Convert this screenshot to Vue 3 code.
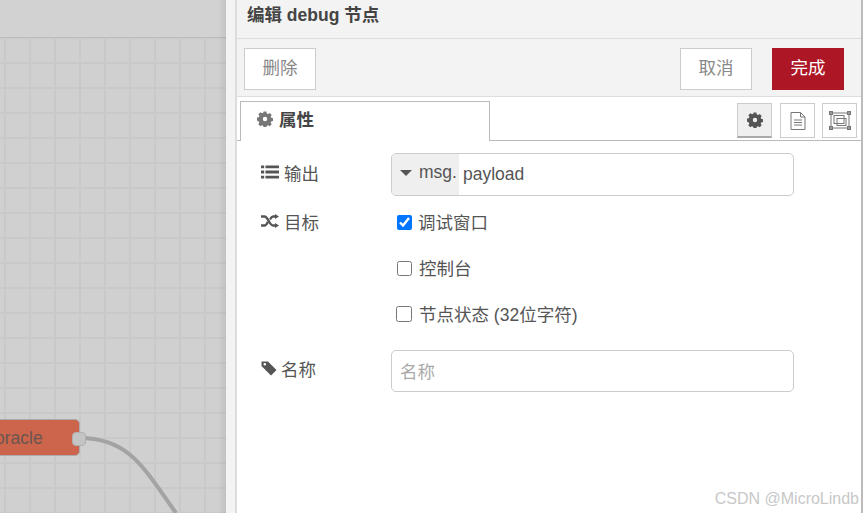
<script setup>
const targets = [
  { label: '调试窗口', checked: true },
  { label: '控制台', checked: false },
  { label: '节点状态 (32位字符)', checked: false }
]
</script>

<template>
  <div class="page">
    <div class="canvas">
      <div class="canvas-head"></div>
      <div class="grid"></div>
      <svg class="wire" width="226" height="513">
        <path d="M80 438 C130 438 145 470 176 513" />
      </svg>
      <div class="node">
        <span class="node-label">oracle</span>
        <span class="port"></span>
      </div>
    </div>

    <div class="tray">
      <div class="tray-inner">
        <div class="title">编辑 debug 节点</div>
        <div class="toolbar">
          <button class="btn">删除</button>
          <div class="spacer"></div>
          <button class="btn">取消</button>
          <button class="btn primary">完成</button>
        </div>
        <div class="tabs">
          <div class="tab">
            <svg class="icon gear" viewBox="0 0 16 16"><path d="M6.600 .5h2.800l.4 1.900 1.300.5 1.600-1 2 2-1 1.600.5 1.300 1.900.4v2.800l-1.900.4-.5 1.300 1 1.600-2 2-1.600-1-1.300.5-.4 1.900H6.600l-.4-1.900-1.300-.5-1.600 1-2-2 1-1.600-.5-1.300L0 9.400V6.600l1.900-.4.5-1.300-1-1.600 2-2 1.600 1 1.300-.5zM8 5.800a2.200 2.200 0 1 0 0 4.400 2.200 2.200 0 0 0 0-4.400z" fill-rule="evenodd" /></svg>
            <span>属性</span>
          </div>
          <div class="spacer"></div>
          <div class="tab-btn active">
            <svg class="icon gear-dark" viewBox="0 0 16 16"><path d="M6.600 .5h2.800l.4 1.900 1.300.5 1.600-1 2 2-1 1.600.5 1.300 1.900.4v2.800l-1.900.4-.5 1.300 1 1.600-2 2-1.600-1-1.300.5-.4 1.900H6.600l-.4-1.900-1.300-.5-1.600 1-2-2 1-1.600-.5-1.300L0 9.400V6.600l1.900-.4.5-1.300-1-1.600 2-2 1.600 1 1.300-.5zM8 5.800a2.200 2.200 0 1 0 0 4.400 2.200 2.200 0 0 0 0-4.400z" fill-rule="evenodd" /></svg>
          </div>
          <div class="tab-btn">
            <svg class="doc" width="16" height="18" viewBox="0 0 16 18">
              <path d="M1 .5H10.500L15 5V17.500H1Z" />
              <path d="M10.500 .5V5H15M4 8H12M4 10.500H12M4 13H12" />
            </svg>
          </div>
          <div class="tab-btn">
            <svg class="frame" width="22" height="20" viewBox="0 0 22 20">
              <rect x="2" y="2" width="18" height="15" />
              <rect x="5" y="4.500" width="10" height="8" />
              <rect x="8" y="7.500" width="9" height="7" />
              <rect class="dot" x="0.500" y="0.500" width="3" height="3" />
              <rect class="dot" x="18.500" y="0.500" width="3" height="3" />
              <rect class="dot" x="0.500" y="15.500" width="3" height="3" />
              <rect class="dot" x="18.500" y="15.500" width="3" height="3" />
            </svg>
          </div>
        </div>

        <div class="form">
          <div class="row output">
            <label class="lbl">
              <svg class="icon list" viewBox="0 0 18 14"><path d="M0 .5h3.200v2.800H0zM4.500 .5H18v2.800H4.500zM0 5.600h3.200v2.800H0zM4.500 5.600H18v2.800H4.500zM0 10.700h3.200v2.800H0zM4.500 10.700H18v2.800H4.500z" /></svg>
              <span>输出</span>
            </label>
            <div class="typed">
              <div class="typed-type"><i class="caret"></i><span>msg.</span></div>
              <span class="typed-value">payload</span>
            </div>
          </div>

          <div class="row target">
            <label class="lbl">
              <svg class="icon shuffle" viewBox="0 0 18 14"><path d="M0 2.500h3.500c3.500 0 5 9 8.500 9h2.500" /><path d="M0 11.500h3.500c1.500 0 2.500-1.800 3.500-3.800M9 5.500c.9-1.600 1.800-3 3-3h2.500" /><path class="head" d="M14 0l4 2.500-4 2.500zM14 9l4 2.500-4 2.500z" /></svg>
              <span>目标</span>
            </label>
            <div class="checks">
              <label v-for="t in targets" :key="t.label" class="check">
                <input type="checkbox" :checked="t.checked" />
                <span>{{ t.label }}</span>
              </label>
            </div>
          </div>

          <div class="row name">
            <label class="lbl">
              <svg class="icon tag" viewBox="0 0 16 16"><path d="M.5 1.500h6.500l8.500 8.500-5.500 5.500-9.500-9.500zM3.800 3a1.300 1.300 0 1 0 0 2.600 1.300 1.300 0 0 0 0-2.600z" fill-rule="evenodd" /></svg>
              <span class="name-text">名称</span>
            </label>
            <div class="text-input">名称</div>
          </div>
        </div>
      </div>
      <div class="watermark">CSDN @MicroLindb</div>
    </div>
  </div>
</template>

<style>
html, body {
  margin: 0;
  overflow: hidden;
}
</style>

<style scoped>
.page {
  display: flex;
  width: 863px;
  height: 513px;
  overflow: hidden;
  font-family: "Liberation Sans", "Noto Sans CJK SC", sans-serif;
  font-size: 17.5px;
  color: #555;
}

.canvas {
  position: relative;
  width: 226px;
  flex: none;
  background: #d0d0d0;
}

.canvas-head {
  height: 37px;
  background: #d2d2d2;
  border-bottom: 1px solid #bdbdbd;
}

.grid {
  position: absolute;
  top: 38px;
  left: 0;
  right: 0;
  bottom: 0;
  background-image:
    linear-gradient(to right, #c9c9c9 2px, transparent 2px),
    linear-gradient(to bottom, #c9c9c9 2px, transparent 2px);
  background-size: 25px 25px;
  background-position: 4px 24px;
}

.canvas::after {
  content: "";
  position: absolute;
  top: 0;
  right: 0;
  bottom: 0;
  width: 8px;
  background: linear-gradient(to right, rgba(0, 0, 0, 0), rgba(0, 0, 0, 0.07));
}

.wire {
  position: absolute;
  top: 0;
  left: 0;
}

.wire path {
  fill: none;
  stroke: #a3a3a3;
  stroke-width: 4;
}

.node {
  position: absolute;
  left: -19px;
  top: 419px;
  width: 99px;
  height: 37px;
  box-sizing: border-box;
  background: #cd654c;
  border: 1px solid #ababab;
  border-radius: 5px;
  display: flex;
  align-items: center;
  padding: 1px 0 0 13px;
  color: #6a5550;
}

.port {
  position: absolute;
  right: -7px;
  top: 12px;
  width: 12px;
  height: 12px;
  background: #c4c4c4;
  border: 1px solid #b0b0b0;
  border-radius: 4px;
}

.tray {
  position: relative;
  flex: 1;
  background: #f3f3f3;
  padding-left: 9px;
}

.tray-inner {
  height: 100%;
  background: #fff;
  border-left: 2px solid #dcdcdc;
  border-right: 2px solid #bbb;
}

.title {
  height: 39px;
  box-sizing: border-box;
  background: #f3f3f3;
  border-bottom: 1px solid #ddd;
  padding: 1px 0 0 10px;
  font-weight: bold;
  color: #444;
}

.toolbar {
  height: 58px;
  box-sizing: border-box;
  background: #f3f3f3;
  border-bottom: 1px solid #ddd;
  display: flex;
  align-items: flex-start;
  gap: 20px;
  padding: 9px 17px 0 7px;
}

.spacer {
  flex: 1;
}

.btn {
  width: 72px;
  height: 42px;
  background: #fff;
  border: 1px solid #ccc;
  font: inherit;
  color: #888;
  padding: 0 0 5px;
}

.btn.primary {
  background: #ad1625;
  border-color: #ad1625;
  color: #fff;
}

.tabs {
  display: flex;
  align-items: flex-end;
  height: 44px;
  box-sizing: border-box;
  border-bottom: 1px solid #bbb;
  padding: 0 4px 0 3px;
  gap: 8px;
}

.tab {
  width: 250px;
  height: 40px;
  box-sizing: border-box;
  margin-bottom: -1px;
  background: #fff;
  border: 1px solid #bbb;
  border-bottom: none;
  display: flex;
  align-items: center;
  gap: 6px;
  padding: 0 0 6px 16px;
  font-weight: bold;
  color: #444;
}

.tab-btn {
  width: 35px;
  height: 35px;
  box-sizing: border-box;
  margin-bottom: 2px;
  background: #fff;
  border: 1px solid #ccc;
  display: flex;
  align-items: center;
  justify-content: center;
}

.tab-btn:last-child {
  margin-left: -1px;
}

.tab-btn.active {
  background: #efefef;
  border-bottom: 2px solid #aaa;
}

.icon {
  flex: none;
  fill: #555;
}

.gear {
  width: 16px;
  height: 16px;
  fill: #777;
}

.gear-dark {
  width: 16px;
  height: 16px;
}

.doc path {
  fill: none;
  stroke: #777;
}

.frame rect {
  fill: none;
  stroke: #777;
}

.frame .dot {
  fill: #999;
}

.form {
  padding: 12px 0 0 24px;
  display: flex;
  flex-direction: column;
}

.row {
  display: flex;
  align-items: flex-start;
}

.lbl {
  width: 130px;
  flex: none;
  display: flex;
  align-items: center;
  gap: 5px;
  height: 38px;
}

.name .lbl {
  height: 36px;
}

.name-text {
  margin-left: -1px;
}

.list,
.shuffle {
  width: 18px;
  height: 14px;
}

.shuffle path {
  fill: none;
  stroke: #555;
  stroke-width: 2.400;
}

.shuffle .head {
  fill: #555;
  stroke: none;
}

.tag {
  width: 16px;
  height: 16px;
}

.typed {
  width: 403px;
  height: 43px;
  box-sizing: border-box;
  border: 1px solid #ccc;
  border-radius: 5px;
  display: flex;
  align-items: center;
  overflow: hidden;
}

.typed-type {
  width: 67px;
  height: 100%;
  flex: none;
  background: #efefef;
  display: flex;
  align-items: center;
  gap: 7px;
  padding: 0 0 4px 8px;
  box-sizing: border-box;
}

.caret {
  width: 0;
  height: 0;
  border-left: 6px solid transparent;
  border-right: 6px solid transparent;
  border-top: 6px solid #555;
}

.typed-value {
  padding-left: 4px;
}

.target {
  margin-top: 6px;
}

.checks {
  display: flex;
  flex-direction: column;
  padding-left: 6px;
  gap: 6px;
}

.check {
  display: flex;
  align-items: center;
  gap: 7px;
  height: 40px;
}

.check span {
  margin-bottom: 2px;
}

.check:first-child {
  gap: 6px;
}

.check input {
  width: 15px;
  height: 15px;
  margin: 0;
  accent-color: #0075ff;
}

.check:last-child input {
  width: 16px;
  height: 16px;
  margin: 0 0 0 -1px;
}

.name {
  margin-top: 16px;
}

.text-input {
  width: 403px;
  height: 42px;
  box-sizing: border-box;
  border: 1px solid #ccc;
  border-radius: 5px;
  display: flex;
  align-items: center;
  padding: 0 0 2px 8px;
  color: #aaa;
}

.watermark {
  position: absolute;
  right: 4px;
  bottom: 5px;
  font-size: 16px;
  color: #c8c8c8;
}
</style>
